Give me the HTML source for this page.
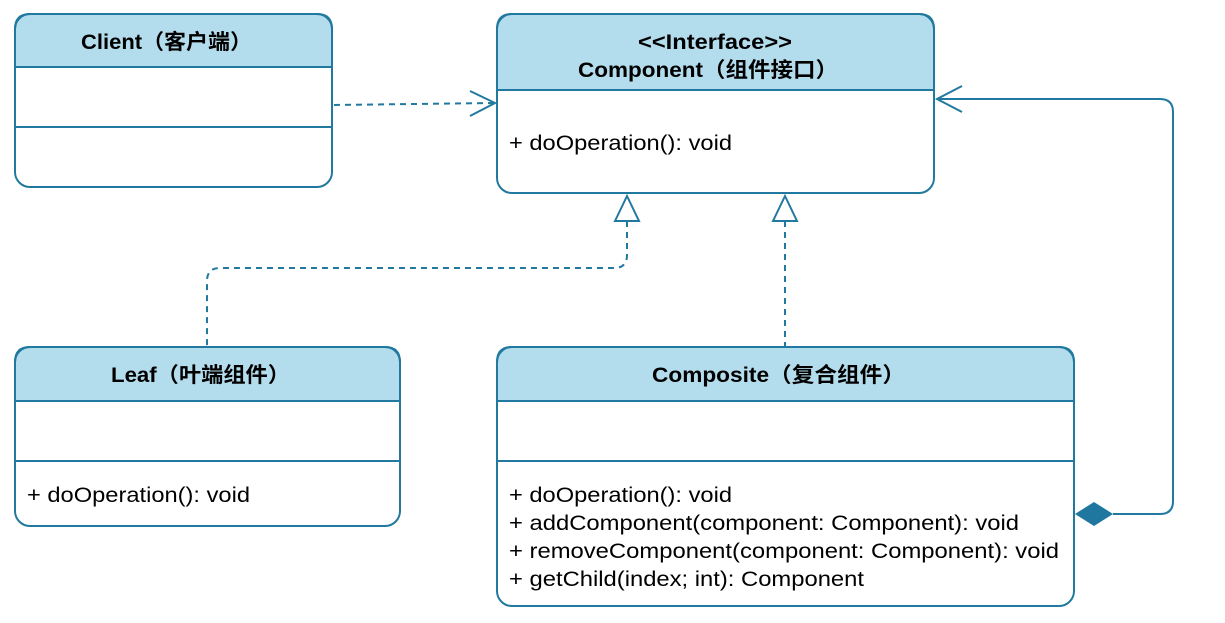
<!DOCTYPE html>
<html><head><meta charset="utf-8"><style>
html,body{margin:0;padding:0;background:#fff;width:1225px;height:623px;overflow:hidden}
svg{display:block}
text{font-family:"Liberation Sans","Noto Sans CJK SC",sans-serif;fill:#000}
.t{font-weight:bold;font-size:21px}
.m{font-size:21px}
</style></head><body>
<svg width="1225" height="623" viewBox="0 0 1225 623">
<g stroke="#21799f" stroke-width="2" fill="none">
<path d="M15 67 V29 Q15 14 30 14 H317 Q332 14 332 29 V67 Z" fill="#b3dcec"/>
<rect x="15" y="14" width="317" height="173" rx="15"/>
<line x1="15" y1="67" x2="332" y2="67"/><line x1="15" y1="127" x2="332" y2="127"/>
<path d="M497 90 V29 Q497 14 512 14 H919 Q934 14 934 29 V90 Z" fill="#b3dcec"/>
<rect x="497" y="14" width="437" height="179" rx="15"/>
<line x1="497" y1="90" x2="934" y2="90"/>
<path d="M15 401 V362 Q15 347 30 347 H385 Q400 347 400 362 V401 Z" fill="#b3dcec"/>
<rect x="15" y="347" width="385" height="179" rx="15"/>
<line x1="15" y1="401" x2="400" y2="401"/><line x1="15" y1="461" x2="400" y2="461"/>
<path d="M497 401 V362 Q497 347 512 347 H1059 Q1074 347 1074 362 V401 Z" fill="#b3dcec"/>
<rect x="497" y="347" width="577" height="259" rx="15"/>
<line x1="497" y1="401" x2="1074" y2="401"/><line x1="497" y1="461" x2="1074" y2="461"/>
<path d="M334 105 L493 103" stroke-dasharray="6 5"/>
<path d="M470 91 L495 103 L470 116"/>
<path d="M627 221 V255 Q627 268 614 268 H220 Q207 268 207 281 V347" stroke-dasharray="6 5"/>
<path d="M615 221 L627 196 L639 221 Z" fill="#fff"/>
<path d="M785 221 V347" stroke-dasharray="6 5"/>
<path d="M773 221 L785 196 L797 221 Z" fill="#fff"/>
<path d="M1113 514 H1160 Q1173 514 1173 501 V112 Q1173 99 1160 99 H937"/>
<path d="M962 86 L937 99 L962 112"/>
</g>
<path d="M1075 514 L1094 502 L1113 514 L1094 526 Z" fill="#1f77a0"/>
<text class="t" x="81" y="49" textLength="171" lengthAdjust="spacingAndGlyphs">Client（客户端）</text>
<text class="t" x="638" y="49" textLength="154" lengthAdjust="spacingAndGlyphs">&lt;&lt;Interface&gt;&gt;</text>
<text class="t" x="578" y="77" textLength="260" lengthAdjust="spacingAndGlyphs">Component（组件接口）</text>
<text class="m" x="509" y="150" textLength="223" lengthAdjust="spacingAndGlyphs">+ doOperation(): void</text>
<text class="t" x="111" y="382" textLength="179" lengthAdjust="spacingAndGlyphs">Leaf（叶端组件）</text>
<text class="m" x="27" y="502" textLength="223" lengthAdjust="spacingAndGlyphs">+ doOperation(): void</text>
<text class="t" x="652" y="382" textLength="253" lengthAdjust="spacingAndGlyphs">Composite（复合组件）</text>
<text class="m" x="509" y="502" textLength="223" lengthAdjust="spacingAndGlyphs">+ doOperation(): void</text>
<text class="m" x="509" y="530" textLength="510" lengthAdjust="spacingAndGlyphs">+ addComponent(component: Component): void</text>
<text class="m" x="509" y="558" textLength="550" lengthAdjust="spacingAndGlyphs">+ removeComponent(component: Component): void</text>
<text class="m" x="509" y="586" textLength="355" lengthAdjust="spacingAndGlyphs">+ getChild(index; int): Component</text>
</svg>
</body></html>
